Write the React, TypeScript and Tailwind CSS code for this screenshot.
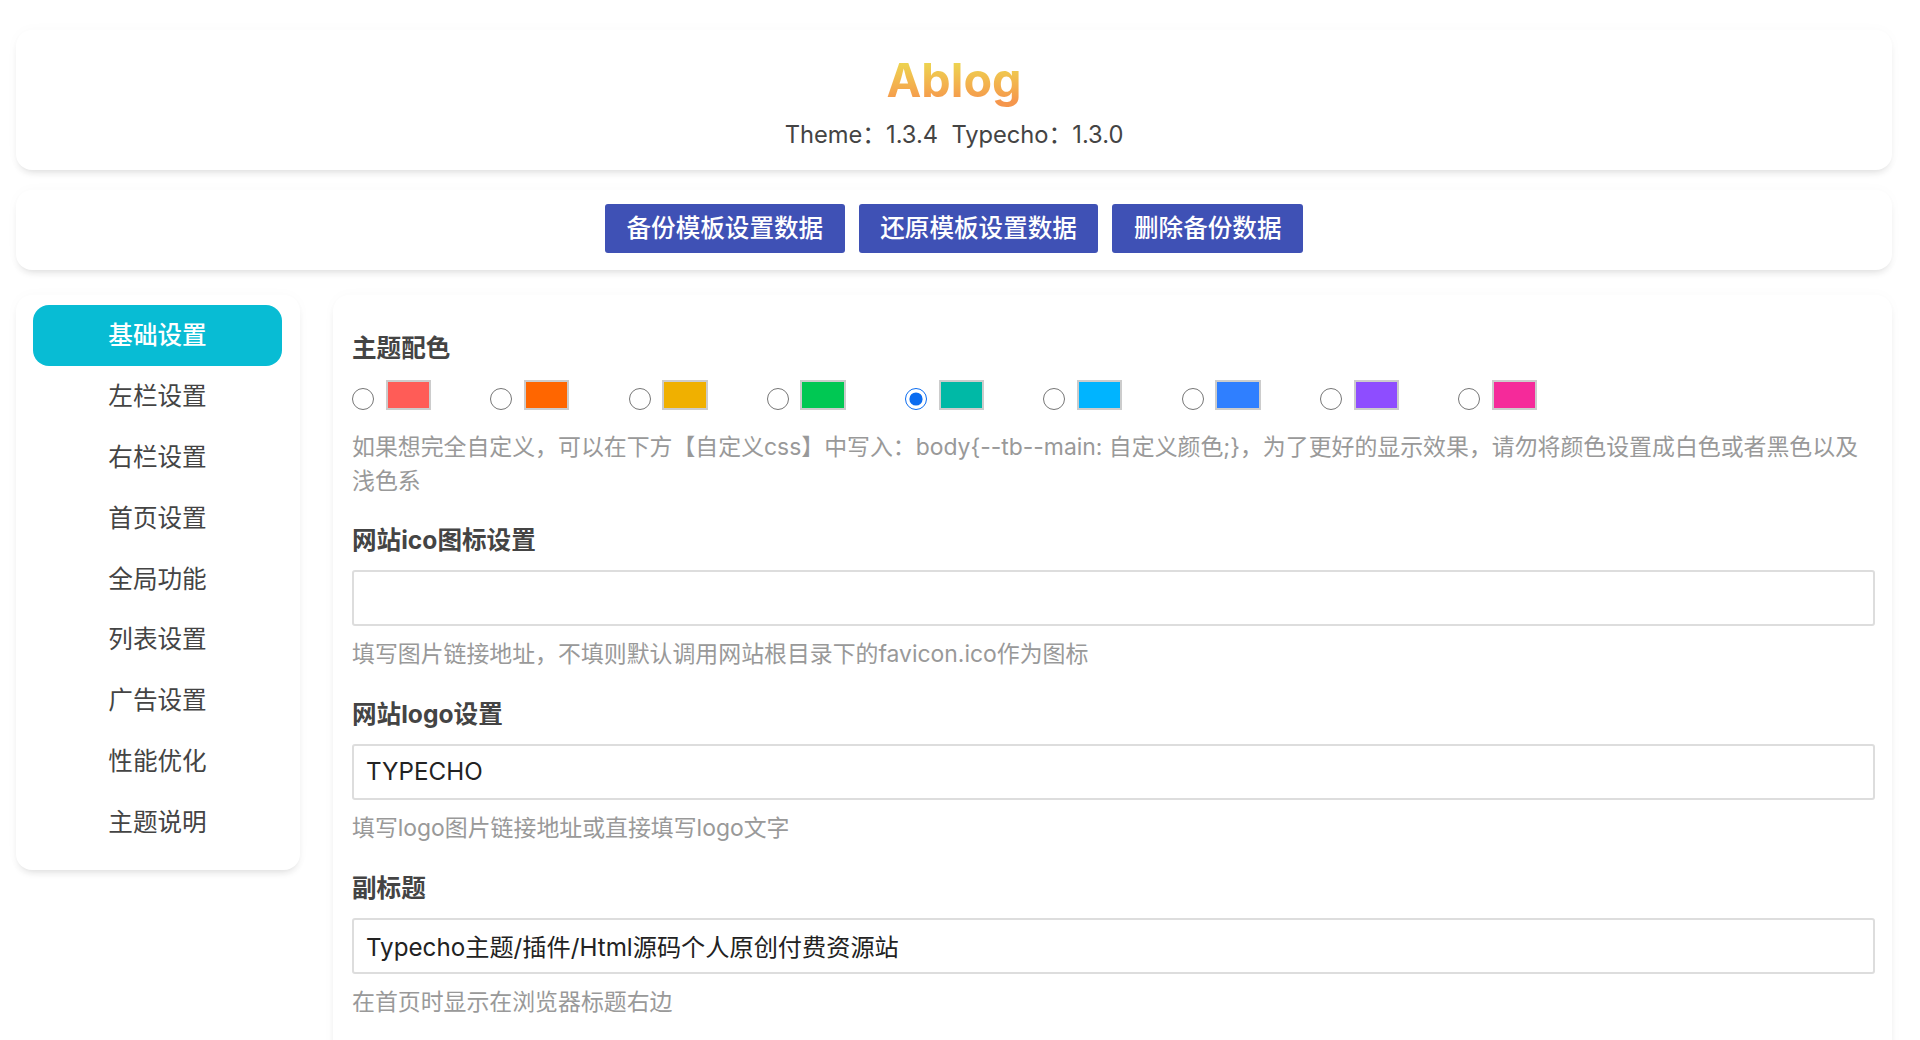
import React from "react";

const FONT = "font-['Inter','Noto_Sans_CJK_SC',sans-serif]";
const CARD = "bg-white rounded-2xl shadow-[0_5px_9px_-4px_rgba(0,0,0,0.16),0_0_14px_rgba(0,0,0,0.025)]";

const menu = ["基础设置", "左栏设置", "右栏设置", "首页设置", "全局功能", "列表设置", "广告设置", "性能优化", "主题说明"];
const swatches = ["#ff5c57", "#ff6600", "#f0b000", "#00c853", "#00b9a6", "#00b4ff", "#2f7fff", "#8e4dff", "#f52a9a"];
const buttons = ["备份模板设置数据", "还原模板设置数据", "删除备份数据"];

function Label({ children }: { children: React.ReactNode }) {
  return <div className="text-[24.6px] leading-[34px] font-bold text-[#444]">{children}</div>;
}

function Help({ children }: { children: React.ReactNode }) {
  return <div className="text-[22.9px] leading-[34px] text-[#999]">{children}</div>;
}

function Field({ label, value, help, className }: { label: string; value: string; help: string; className: string }) {
  return (
    <div className={className}>
      <Label>{label}</Label>
      <input
        readOnly
        value={value}
        className="block w-full h-[56px] mt-[12.5px] mb-[11.5px] px-[12px] border-2 border-[#ddd] rounded-[3px] bg-white text-[24.2px] text-[#222] outline-none"
      />
      <Help>{help}</Help>
    </div>
  );
}

export default function App() {
  return (
    <div className={`${FONT} h-[1040px] overflow-hidden bg-white pl-4 pr-[28px] pt-[30px]`}>
      <header className={`${CARD} h-[140px] flex flex-col items-center pt-[19px]`}>
        <div className="text-[46.7px] leading-[62px] font-bold bg-gradient-to-b from-[#ecd650] from-20% to-[#f5964c] to-85% bg-clip-text text-transparent">
          Ablog
        </div>
        <div className="mt-[7px] text-[23.7px] leading-[34px] text-[#444]">Theme：1.3.4&nbsp;&nbsp;Typecho：1.3.0</div>
      </header>

      <section className={`${CARD} h-[80px] mt-[20px] flex justify-center gap-[14px] pt-[14px]`}>
        {buttons.map((b) => (
          <button key={b} className="h-[49px] px-[21.5px] rounded-[3px] bg-[#3f51b5] text-white text-[24.6px] font-medium">
            {b}
          </button>
        ))}
      </section>

      <div className="mt-[25px] flex gap-[33px] items-start">
        <nav className={`${CARD} w-[284px] shrink-0 h-[575px] pl-[17px] pr-[18px] pt-[10px]`}>
          {menu.map((m, i) => (
            <div
              key={m}
              className={`h-[60.9px] flex items-center justify-center text-[24.6px] ${
                i === 0 ? "bg-[#08bcd4] text-white rounded-2xl font-medium" : "text-[#444]"
              }`}
            >
              {m}
            </div>
          ))}
        </nav>

        <main className={`${CARD} flex-1 min-w-0 h-[800px] pl-[19px] pr-[17px] pt-[36px]`}>
          <Label>主题配色</Label>
          <div className="flex mt-[15px]">
            {swatches.map((c, i) => (
              <label key={c} className="w-[138.3px] shrink-0 flex items-start">
                <input type="radio" name="theme" defaultChecked={i === 4} className="w-[22px] h-[22px] mt-[8px] m-0 accent-[#0b6cf0]" />
                <span className="w-[45.5px] h-[30px] ml-[11.5px] border-2 border-[#ccc]" style={{ backgroundColor: c }} />
              </label>
            ))}
          </div>
          <div className="mt-[20px]">
            <Help>
              如果想完全自定义，可以在下方【自定义css】中写入：body{"{--tb--main: 自定义颜色;}"}，为了更好的显示效果，请勿将颜色设置成白色或者黑色以及浅色系
            </Help>
          </div>
          <Field className="mt-[25px]" label="网站ico图标设置" value="" help="填写图片链接地址，不填则默认调用网站根目录下的favicon.ico作为图标" />
          <Field className="mt-[26px]" label="网站logo设置" value="TYPECHO" help="填写logo图片链接地址或直接填写logo文字" />
          <Field className="mt-[26px]" label="副标题" value="Typecho主题/插件/Html源码个人原创付费资源站" help="在首页时显示在浏览器标题右边" />
        </main>
      </div>
    </div>
  );
}
